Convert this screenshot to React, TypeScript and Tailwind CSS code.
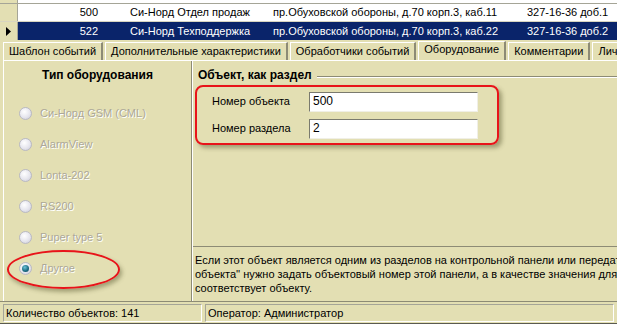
import React from "react";

const font = { fontFamily: '"Liberation Sans", Arial, sans-serif' };

function Radio({ label, checked }: { label: string; checked?: boolean }) {
  return (
    <div className="flex items-center h-[31px] pl-[15px] whitespace-nowrap">
      <div className="w-[13px] h-[13px] shrink-0 rounded-full border border-[#b9b9c4] bg-[radial-gradient(circle_at_40%_35%,#ffffff_0%,#e6e6ee_55%,#c8c8d4_100%)] flex items-center justify-center">
        {checked && (
          <div className="w-[7px] h-[7px] rounded-full bg-[radial-gradient(circle_at_40%_35%,#6fc3d8_0%,#1d6f86_55%,#0b3f50_100%)]" />
        )}
      </div>
      <span className="ml-[8px] text-[#aca899] [text-shadow:1px_1px_0_#ffffff]">{label}</span>
    </div>
  );
}

export default function App() {
  return (
    <div className="relative w-[617px] h-[324px] overflow-hidden bg-[#e3dfb3] text-[11px] text-black leading-[13px]" style={font}>
      {/* Grid */}
      <div className="h-[40px] flex flex-col">
        <div className="h-[4px] flex border-b border-[#a5a597]">
          <div className="w-[18px] shrink-0 bg-[#e3dfb3] border-r border-[#a5a597]" />
          <div className="flex-1 bg-white" />
        </div>
        <div className="h-[18px] flex border-b border-[#d8d5c0]">
          <div className="w-[18px] shrink-0 bg-[#e3dfb3] border-r border-[#a5a597]" />
          <div className="flex-1 bg-white flex items-center whitespace-nowrap">
            <span className="w-[80px] shrink-0 text-right">500</span>
            <span className="w-[175px] shrink-0 pl-[32px]">Си-Норд Отдел продаж</span>
            <span className="w-[254px] shrink-0">пр.Обуховской обороны, д.70 корп.3, каб.11</span>
            <span>327-16-36 доб.1</span>
          </div>
        </div>
        <div className="h-[18px] flex">
          <div className="w-[18px] shrink-0 bg-[#e3dfb3] border-r border-[#a5a597] flex items-center pl-[6px]">
            <svg width="5" height="9" viewBox="0 0 5 9"><path d="M0 0 L5 4.5 L0 9 Z" fill="#000" /></svg>
          </div>
          <div className="flex-1 bg-[#0a246a] text-white flex items-center whitespace-nowrap">
            <span className="w-[80px] shrink-0 text-right">522</span>
            <span className="w-[175px] shrink-0 pl-[32px]">Си-Норд Техподдержка</span>
            <span className="w-[254px] shrink-0">пр.Обуховской обороны, д.70 корп.3, каб.22</span>
            <span>327-16-36 доб.2</span>
          </div>
        </div>
      </div>

      {/* Tabs */}
      <div className="h-[20px] flex items-end pl-[3px] whitespace-nowrap overflow-hidden">
        {["Шаблон событий", "Дополнительные характеристики", "Обработчики событий"].map((t) => (
          <div key={t} className="h-[18px] shrink-0 px-[5px] mr-[2px] flex items-center border-t border-l border-white border-r-2 border-r-[#8d8b75] bg-[#e3dfb3]">
            {t}
          </div>
        ))}
        <div className="h-[20px] shrink-0 px-[5px] mr-[2px] flex items-start pt-[1px] border-t border-l border-white border-r-2 border-r-[#8d8b75] bg-[#e3dfb3] -mb-[1px] relative z-10">
          Оборудование
        </div>
        {["Комментарии", "Личные данные"].map((t) => (
          <div key={t} className="h-[18px] shrink-0 px-[5px] mr-[2px] flex items-center border-t border-l border-white border-r-2 border-r-[#8d8b75] bg-[#e3dfb3]">
            {t}
          </div>
        ))}
      </div>

      {/* Body */}
      <div className="h-[241px] ml-[3px] border-t border-l border-white flex">
        {/* Left pane */}
        <div className="w-[188px] shrink-0 flex flex-col border-r border-[#8d8b75]">
          <div className="pt-[8px] h-[37px] text-center font-bold text-[12px] whitespace-nowrap">Тип оборудования</div>
          <Radio label="Си-Норд GSM (CML)" />
          <Radio label="AlarmView" />
          <Radio label="Lonta-202" />
          <Radio label="RS200" />
          <Radio label="Puper type 5" />
          <Radio label="Другое" checked />
        </div>
        {/* Right pane */}
        <div className="flex-1 min-w-0 flex flex-col border-l border-white">
          <div className="h-[185px] shrink-0 flex flex-col">
            <div className="flex items-center pt-[8px] pl-[5px]">
              <span className="font-bold text-[12px] whitespace-nowrap">Объект, как раздел</span>
              <div className="flex-1 ml-[5px] mt-[2px] border-t border-[#8d8b75] border-b border-b-white" />
            </div>
            <div className="ml-[2px] mt-[3px] w-[304px] h-[60px] rounded-[8px] border-2 border-[#e8141a] shadow-[3px_3px_4px_rgba(80,80,40,0.45)] flex flex-col justify-center gap-[7px] pl-[15px]">
              <div className="flex items-center h-[20px]">
                <span className="w-[97px] shrink-0 whitespace-nowrap">Номер объекта</span>
                <div className="w-[169px] h-[20px] bg-white border-t border-l border-[#7a7a6e] border-r border-b border-r-[#f0efe6] border-b-[#f0efe6] pl-[3px] flex items-center text-[12px]">500</div>
              </div>
              <div className="flex items-center h-[20px]">
                <span className="w-[97px] shrink-0 whitespace-nowrap">Номер раздела</span>
                <div className="w-[169px] h-[20px] bg-white border-t border-l border-[#7a7a6e] border-r border-b border-r-[#f0efe6] border-b-[#f0efe6] pl-[3px] flex items-center text-[12px]">2</div>
              </div>
            </div>
          </div>
          <div className="flex-1 border-t border-[#8d8b75] pt-[6px] pl-[2px] whitespace-nowrap overflow-hidden leading-[14px]">
            <div>Если этот объект является одним из разделов на контрольной панели или передатчике, то в качестве</div>
            <div>объекта'' нужно задать объектовый номер этой панели, а в качестве значения для номера раздела</div>
            <div>соответствует объекту.</div>
          </div>
        </div>
      </div>

      {/* Status bar */}
      <div className="h-[23px] border-t border-[#8d8b75] flex items-center gap-[3px] px-[3px] whitespace-nowrap">
        <div className="w-[199px] shrink-0 h-[18px] border border-[#a5a597] border-r-white border-b-white flex items-center pl-[2px]">Количество объектов: 141</div>
        <div className="flex-1 h-[18px] border border-[#a5a597] border-r-white border-b-white flex items-center pl-[2px]">Оператор: Администратор</div>
      </div>
      <div className="absolute left-0 right-0 bottom-0 h-[1px] bg-[#5a5a50]" />

      {/* Red ellipse annotation */}
      <div className="absolute left-[7px] top-[250px] w-[113px] h-[39px] rounded-[50%] border-2 border-[#e8141a] shadow-[2px_3px_4px_rgba(80,80,40,0.45)]" />
    </div>
  );
}
